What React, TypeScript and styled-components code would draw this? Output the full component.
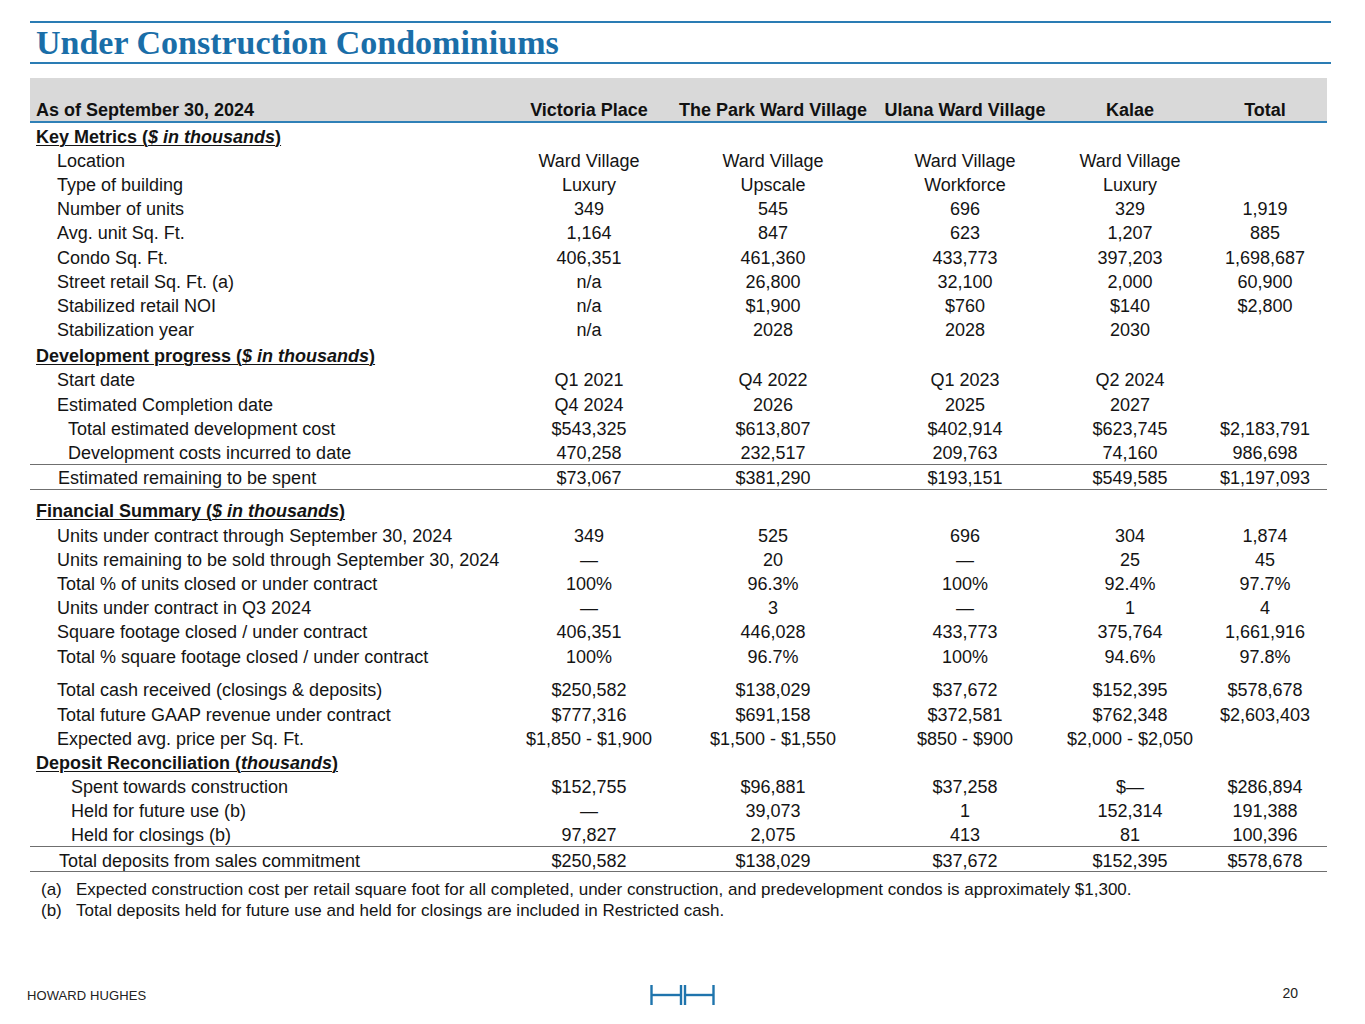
import React from "react";
import styled, { createGlobalStyle } from "styled-components";

const Global = createGlobalStyle`
  html, body { margin: 0; padding: 0; background: #ffffff; }
  body { font-family: "Liberation Sans", Arial, sans-serif; color: #141414; }
`;

const Page = styled.div`
  width: 1365px;
  height: 1024px;
  box-sizing: border-box;
  padding: 21px 0 0 30px;
  display: flex;
  flex-direction: column;
  overflow: hidden;
`;

const TitleBlock = styled.div`
  width: 1301px;
  box-sizing: border-box;
  height: 43px;
  border-top: 2px solid #2a7cb4;
  border-bottom: 2px solid #2a7cb4;
  padding: 1px 0 0 6px;
`;

const Title = styled.h1`
  margin: 0;
  font-family: "Liberation Serif", "Times New Roman", serif;
  font-weight: 700;
  font-size: 34px;
  line-height: 37px;
  color: #1a6ea8;
`;

const Table = styled.div`
  width: 1297px;
  margin-top: 14px;
  display: flex;
  flex-direction: column;
`;

const cols = "475px 168px 200px 184px 146px 124px";

const HeaderRow = styled.div`
  display: grid;
  grid-template-columns: ${cols};
  align-items: end;
  box-sizing: border-box;
  height: 45px;
  padding-bottom: 1px;
  background: #d9d9d9;
  border-bottom: 2px solid #2f80b7;
  font-weight: 700;
  font-size: 18px;
  line-height: 20px;
  color: #111;
`;

const HeaderLabel = styled.div`
  padding-left: 6px;
`;

const HeaderCell = styled.div`
  text-align: center;
  white-space: nowrap;
`;

const Row = styled.div<{ $mt?: number; $rule?: boolean }>`
  display: grid;
  grid-template-columns: ${cols};
  align-items: center;
  box-sizing: content-box;
  height: 21.2px;
  padding-top: 3px;
  margin-top: ${(p) => p.$mt ?? 0}px;
  border-bottom: ${(p) => (p.$rule ? "1.5px solid #6f6f6f" : "0")};
  font-size: 18px;
  line-height: 20px;
`;

const Label = styled.div<{ $indent: number }>`
  padding-left: ${(p) => p.$indent}px;
  white-space: nowrap;
`;

const Cell = styled.div`
  text-align: center;
  white-space: nowrap;
`;

const Heading = styled.div`
  padding-left: 6px;
  font-weight: 700;
  text-decoration: underline;
  text-decoration-thickness: 1px;
  text-underline-offset: 2px;
  white-space: nowrap;
`;

const Notes = styled.div`
  margin-top: 7px;
  display: flex;
  flex-direction: column;
  font-size: 17px;
  line-height: 21px;
  padding-left: 11px;
`;

const Note = styled.div`
  display: grid;
  grid-template-columns: 35px 1fr;
`;

const Footer = styled.div`
  margin-top: auto;
  margin-left: -30px;
  width: 1365px;
  box-sizing: border-box;
  height: 40px;
  margin-bottom: 9px;
  padding: 0 27px;
  display: grid;
  grid-template-columns: 1fr auto 1fr;
  align-items: center;
`;

const Brand = styled.div`
  font-size: 13px;
  color: #222;
  letter-spacing: 0.1px;
`;

const PageNo = styled.div`
  justify-self: end;
  margin-right: 40px;
  margin-top: -4px;
  font-size: 14px;
  color: #222;
`;

const Logo = () => (
  <svg width="65" height="22" viewBox="0 0 65 22" fill="none" stroke="#1f74ad" strokeWidth="2.4">
    <line x1="1.5" y1="1" x2="1.5" y2="21" />
    <line x1="1.5" y1="11" x2="31" y2="11" />
    <line x1="31" y1="1" x2="31" y2="21" />
    <line x1="35" y1="1" x2="35" y2="21" />
    <line x1="35" y1="11" x2="63.5" y2="11" />
    <line x1="63.5" y1="1" x2="63.5" y2="21" />
  </svg>
);

type DataRow = {
  kind?: "data";
  label: string;
  indent: number;
  values: string[];
  mt?: number;
  rule?: boolean;
};
type HeadRow = { kind: "head"; pre: string; ital: string; mt?: number };
type AnyRow = DataRow | HeadRow;

const rows: AnyRow[] = [
  { kind: "head", pre: "Key Metrics (", ital: "$ in thousands" },
  { label: "Location", indent: 27, values: ["Ward Village", "Ward Village", "Ward Village", "Ward Village", ""] },
  { label: "Type of building", indent: 27, values: ["Luxury", "Upscale", "Workforce", "Luxury", ""] },
  { label: "Number of units", indent: 27, values: ["349", "545", "696", "329", "1,919"] },
  { label: "Avg. unit Sq. Ft.", indent: 27, values: ["1,164", "847", "623", "1,207", "885"] },
  { label: "Condo Sq. Ft.", indent: 27, values: ["406,351", "461,360", "433,773", "397,203", "1,698,687"] },
  { label: "Street retail Sq. Ft. (a)", indent: 27, values: ["n/a", "26,800", "32,100", "2,000", "60,900"] },
  { label: "Stabilized retail NOI", indent: 27, values: ["n/a", "$1,900", "$760", "$140", "$2,800"] },
  { label: "Stabilization year", indent: 27, values: ["n/a", "2028", "2028", "2030", ""] },
  { kind: "head", pre: "Development progress (", ital: "$ in thousands", mt: 2 },
  { label: "Start date", indent: 27, values: ["Q1 2021", "Q4 2022", "Q1 2023", "Q2 2024", ""] },
  { label: "Estimated Completion date", indent: 27, values: ["Q4 2024", "2026", "2025", "2027", ""] },
  { label: "Total estimated development cost", indent: 38, values: ["$543,325", "$613,807", "$402,914", "$623,745", "$2,183,791"] },
  { label: "Development costs incurred to date", indent: 38, values: ["470,258", "232,517", "209,763", "74,160", "986,698"], rule: true },
  { label: "Estimated remaining to be spent", indent: 28, values: ["$73,067", "$381,290", "$193,151", "$549,585", "$1,197,093"], rule: true },
  { kind: "head", pre: "Financial Summary (", ital: "$ in thousands", mt: 8 },
  { label: "Units under contract through September 30, 2024", indent: 27, values: ["349", "525", "696", "304", "1,874"] },
  { label: "Units remaining to be sold through September 30, 2024", indent: 27, values: ["\u2014", "20", "\u2014", "25", "45"] },
  { label: "Total % of units closed or under contract", indent: 27, values: ["100%", "96.3%", "100%", "92.4%", "97.7%"] },
  { label: "Units under contract in Q3 2024", indent: 27, values: ["\u2014", "3", "\u2014", "1", "4"] },
  { label: "Square footage closed / under contract", indent: 27, values: ["406,351", "446,028", "433,773", "375,764", "1,661,916"] },
  { label: "Total % square footage closed / under contract", indent: 27, values: ["100%", "96.7%", "100%", "94.6%", "97.8%"] },
  { label: "Total cash received (closings & deposits)", indent: 27, values: ["$250,582", "$138,029", "$37,672", "$152,395", "$578,678"], mt: 9.6 },
  { label: "Total future GAAP revenue under contract", indent: 27, values: ["$777,316", "$691,158", "$372,581", "$762,348", "$2,603,403"] },
  { label: "Expected avg. price per Sq. Ft.", indent: 27, values: ["$1,850 - $1,900", "$1,500 - $1,550", "$850 - $900", "$2,000 - $2,050", ""] },
  { kind: "head", pre: "Deposit Reconciliation (", ital: "thousands" },
  { label: "Spent towards construction", indent: 41, values: ["$152,755", "$96,881", "$37,258", "$\u2014", "$286,894"] },
  { label: "Held for future use (b)", indent: 41, values: ["\u2014", "39,073", "1", "152,314", "191,388"] },
  { label: "Held for closings (b)", indent: 41, values: ["97,827", "2,075", "413", "81", "100,396"], rule: true },
  { label: "Total deposits from sales commitment", indent: 29, values: ["$250,582", "$138,029", "$37,672", "$152,395", "$578,678"], rule: true },
];

const headers = ["Victoria Place", "The Park Ward Village", "Ulana Ward Village", "Kalae", "Total"];

export default function App() {
  return (
    <>
      <Global />
      <Page>
        <TitleBlock>
          <Title>Under Construction Condominiums</Title>
        </TitleBlock>
        <Table>
          <HeaderRow>
            <HeaderLabel>As of September 30, 2024</HeaderLabel>
            {headers.map((h) => (
              <HeaderCell key={h}>{h}</HeaderCell>
            ))}
          </HeaderRow>
          {rows.map((r, i) =>
            r.kind === "head" ? (
              <Row key={i} $mt={r.mt}>
                <Heading>
                  {r.pre}
                  <i>{r.ital}</i>)
                </Heading>
              </Row>
            ) : (
              <Row key={i} $mt={r.mt} $rule={r.rule}>
                <Label $indent={r.indent}>{r.label}</Label>
                {r.values.map((v, j) => (
                  <Cell key={j}>{v}</Cell>
                ))}
              </Row>
            )
          )}
        </Table>
        <Notes>
          <Note>
            <span>(a)</span>
            <span>
              Expected construction cost per retail square foot for all completed, under construction, and predevelopment condos is approximately $1,300.
            </span>
          </Note>
          <Note>
            <span>(b)</span>
            <span>Total deposits held for future use and held for closings are included in Restricted cash.</span>
          </Note>
        </Notes>
        <Footer>
          <Brand>HOWARD HUGHES</Brand>
          <Logo />
          <PageNo>20</PageNo>
        </Footer>
      </Page>
    </>
  );
}
